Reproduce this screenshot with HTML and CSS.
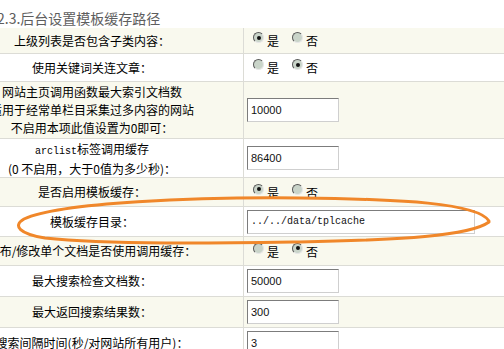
FILE: index.html
```html
<!DOCTYPE html>
<html lang="zh-CN">
<head>
<meta charset="utf-8">
<title>后台设置模板缓存路径</title>
<link rel="stylesheet" href="styles.css">
</head>
<body>
<div class="page">
  <h2 class="title">2.3.后台设置模板缓存路径</h2>
  <table class="cfg">
    <tr class="odd h26">
      <td class="lbl">上级列表是否包含子类内容：</td>
      <td class="val"><span class="opt"><span class="radio on"></span>是</span><span class="opt"><span class="radio"></span>否</span></td>
    </tr>
    <tr class="h28">
      <td class="lbl">使用关键词关连文章：</td>
      <td class="val"><span class="opt"><span class="radio"></span>是</span><span class="opt"><span class="radio on"></span>否</span></td>
    </tr>
    <tr class="odd h57">
      <td class="lbl multi">网站主页调用函数最大索引文档数<br>适用于经常单栏目采集过多内容的网站<br>不启用本项此值设置为0即可：</td>
      <td class="val"><input class="txt" type="text" value="10000"></td>
    </tr>
    <tr class="h39">
      <td class="lbl multi2"><span class="mono">arclist</span>标签调用缓存<br>(0 不启用，大于0值为多少秒)：</td>
      <td class="val"><input class="txt" type="text" value="86400"></td>
    </tr>
    <tr class="odd h29">
      <td class="lbl">是否启用模板缓存：</td>
      <td class="val"><span class="opt"><span class="radio on"></span>是</span><span class="opt"><span class="radio"></span>否</span></td>
    </tr>
    <tr class="h30">
      <td class="lbl">模板缓存目录：</td>
      <td class="val"><input class="txt wide" type="text" value="../../data/tplcache"></td>
    </tr>
    <tr class="odd h29">
      <td class="lbl">发布/修改单个文档是否使用调用缓存：</td>
      <td class="val"><span class="opt"><span class="radio"></span>是</span><span class="opt"><span class="radio on"></span>否</span></td>
    </tr>
    <tr class="h31">
      <td class="lbl">最大搜索检查文档数：</td>
      <td class="val"><input class="txt" type="text" value="50000"></td>
    </tr>
    <tr class="odd h31">
      <td class="lbl">最大返回搜索结果数：</td>
      <td class="val"><input class="txt" type="text" value="300"></td>
    </tr>
    <tr class="h31">
      <td class="lbl">搜索间隔时间(秒/对网站所有用户)：</td>
      <td class="val"><input class="txt" type="text" value="3"></td>
    </tr>
  </table>
  <svg class="mark" width="504" height="349" viewBox="0 0 504 349">
    <path d="M489 221 C 478 203, 400 199, 300 198 C 200 197, 60 202, 24 219 C 12 226, 20 234, 45 238 C 110 245, 230 243, 300 242 C 400 240, 470 236, 489 222" fill="none" stroke="#f0872a" stroke-width="3" stroke-linecap="round"/>
  </svg>
</div>
</body>
</html>
```

FILE: styles.css
```css
html, body {
  margin: 0;
  padding: 0;
  background: #ffffff;
}

.page {
  position: relative;
  width: 504px;
  height: 349px;
  overflow: hidden;
  font-family: "Noto Sans CJK SC", "Noto Sans", sans-serif;
  font-size: 12px;
  color: #000;
}

.title {
  margin: 0 0 0 -3px;
  padding-top: 8px;
  height: 20px;
  font-size: 14px;
  line-height: 20px;
  font-weight: normal;
  color: #5e5e5e;
  font-family: "Noto Sans CJK SC", "Liberation Sans", sans-serif;
}

.cfg {
  margin-left: -59px;
  width: 800px;
  border-collapse: separate;
  border-spacing: 0;
  table-layout: fixed;
}

.cfg td {
  padding: 0;
  border-bottom: 1px solid #dcdcd6;
  box-sizing: border-box;
}

.cfg tr.odd td {
  background: #f9f9ee;
}

.h26 { height: 26px; }
.h28 { height: 28px; }
.h29 { height: 29px; }
.h30 { height: 30px; }
.h31 { height: 31px; }
.h39 { height: 39px; }
.h57 { height: 57px; }

.lbl {
  width: 303px;
  text-align: center;
  border-right: 1px solid #dcdcd6;
  line-height: 16px;
  white-space: nowrap;
}

.lbl.multi {
  line-height: 18px;
}

.lbl.multi2 {
  line-height: 17px;
}

.mono {
  font-family: "Liberation Mono", "DejaVu Sans Mono", monospace;
  font-size: 10px;
}

.val {
  padding-left: 3px !important;
  line-height: 16px;
  white-space: nowrap;
}

.opt {
  display: inline-block;
  margin-left: 6px;
  margin-right: 13px;
}

.opt + .opt {
  margin-left: 0;
}

.radio {
  position: relative;
  display: inline-block;
  box-sizing: border-box;
  width: 11px;
  height: 11px;
  margin-right: 3px;
  border-radius: 50%;
  border: 1px solid;
  border-color: #5a5a5a #e6e6e6 #e6e6e6 #5a5a5a;
  background: #c9d4c9;
  vertical-align: 3px;
}

.radio.on::after {
  content: "";
  position: absolute;
  left: 2.5px;
  top: 2.5px;
  width: 4px;
  height: 4px;
  border-radius: 50%;
  background: #111;
}

.txt {
  display: block;
  box-sizing: border-box;
  width: 92px;
  height: 24px;
  margin: 0;
  padding: 0 3px;
  border: 1px solid;
  border-color: #7c7c7c #cfcfcf #cfcfcf #7c7c7c;
  background: #fff;
  font-family: "Liberation Sans", Arial, sans-serif;
  font-size: 11px;
  color: #111;
}

.txt.wide {
  width: 228px;
  font-family: "Liberation Mono", "DejaVu Sans Mono", monospace;
  font-size: 10px;
}

.mark {
  position: absolute;
  left: 0;
  top: 0;
  pointer-events: none;
}
```
